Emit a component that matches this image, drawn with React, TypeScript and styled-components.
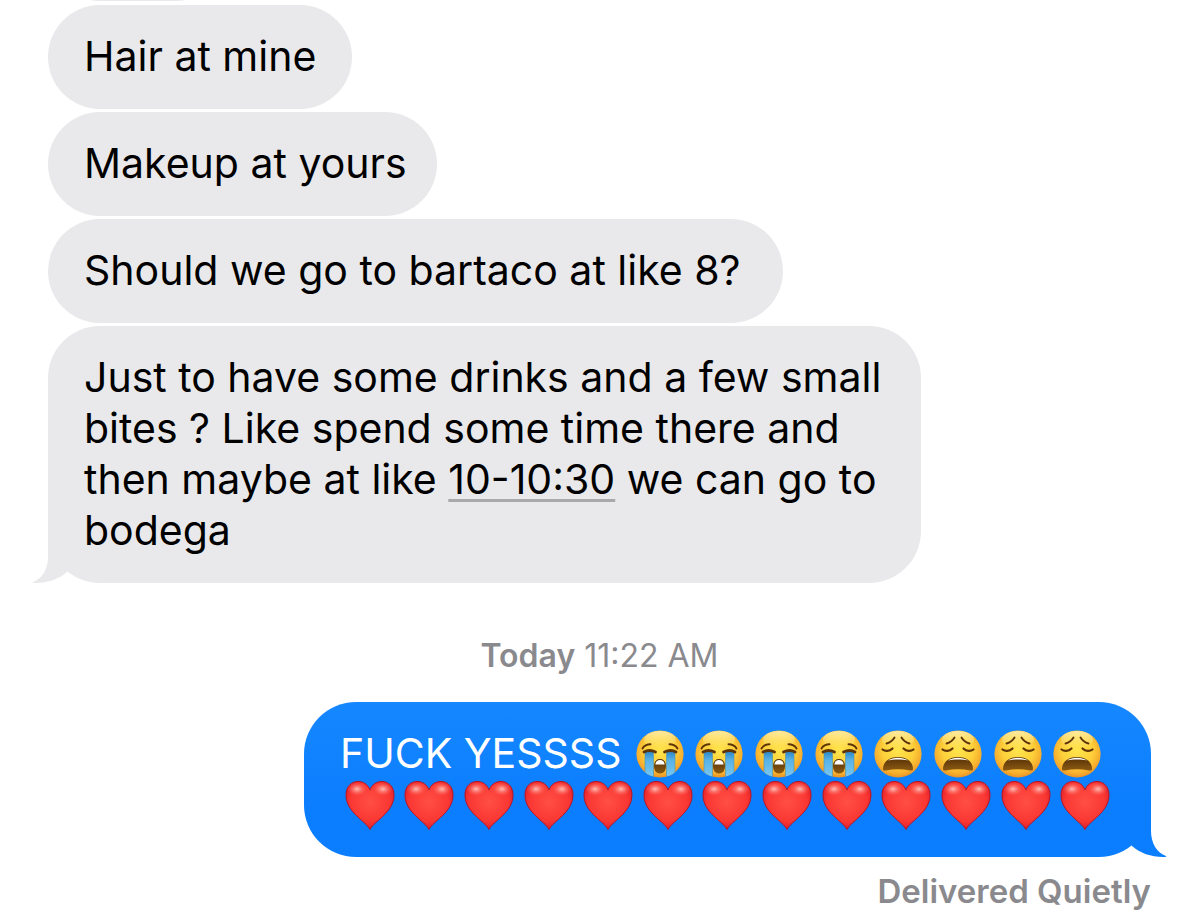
import React from "react";
import styled, { createGlobalStyle } from "styled-components";

const GlobalStyle = createGlobalStyle`
  * { box-sizing: border-box; }
  body { margin: 0; background: #fff; overflow-x: hidden; }
`;

const Thread = styled.main`
  display: flex;
  flex-direction: column;
  padding: 0 48px;
  font-family: Inter, "Liberation Sans", sans-serif;
  font-size: 41px;
  line-height: 51px;
  color: #000;
  overflow: hidden;
`;

const ScrolledAway = styled.div`
  display: flex;
  align-items: flex-end;
  height: 1px;
  margin-bottom: 4px;
  overflow: hidden;
`;

const EarlierBubble = styled.div`
  flex: none;
  width: 180px;
  height: 104px;
  border-radius: 52px;
  background: #e9e9eb;
`;

const Received = styled.section`
  display: flex;
  flex-direction: column;
  align-items: flex-start;
  gap: 3px;
`;

const endPadding = { snug: "30px", regular: "36px", roomy: "42px" };

const Bubble = styled.div<{ $sent?: boolean; $end?: keyof typeof endPadding }>`
  position: relative;
  max-width: ${(p) => (p.$sent ? "847px" : "873px")};
  padding: 26px ${(p) => endPadding[p.$end ?? "regular"]} 27px 36px;
  border-radius: 52px;
  color: ${(p) => (p.$sent ? "#fff" : "#000")};
  background: ${(p) =>
    p.$sent ? "linear-gradient(#1587ff, #0b7eff 68%)" : "#e9e9eb"};
`;

const LongBubble = styled(Bubble)`
  width: 100%;
`;

const TailShape = styled.svg<{ $sent?: boolean }>`
  position: absolute;
  bottom: 0;
  ${(p) => (p.$sent ? "right: -16px; transform: scaleX(-1);" : "left: -16px;")}
  width: 52px;
  height: 54px;
  fill: ${(p) => (p.$sent ? "#0b7eff" : "#e9e9eb")};
`;

const Message = styled.p`
  margin: 0;
  white-space: nowrap;
`;

const TimeLink = styled.a`
  color: inherit;
  text-decoration: underline #a9a9ac 3px;
  text-underline-offset: 5px;
  text-decoration-skip-ink: none;
`;

const Stamp = styled.p`
  margin: 53px 0 26px;
  text-align: center;
  font-size: 32px;
  line-height: 40px;
  color: #8a8a8e;
`;

const Strong = styled.strong`
  font-weight: 600;
`;

const Sent = styled.section`
  display: flex;
  flex-direction: column;
  align-items: flex-end;
`;

const Line = styled.div`
  display: flex;
  justify-content: space-between;
  height: 51px;
  padding-right: 8px;
`;

const Faces = styled.span`
  display: grid;
  grid-template-columns: repeat(8, 1fr);
  flex: 0 0 477px;
  place-items: center;
`;

const Hearts = styled.div`
  display: grid;
  grid-template-columns: repeat(13, 1fr);
  height: 51px;
  place-items: center;
`;

const Emoji = styled.svg`
  display: block;
  width: 50px;
  height: 50px;
`;

const Receipt = styled.p`
  margin: 14px 0 0;
  font-size: 33px;
  line-height: 40px;
  font-weight: 600;
  color: #8a8a8e;
`;

const Tail = ({ sent }: { sent?: boolean }) => (
  <TailShape $sent={sent} viewBox="0 0 52 54" aria-hidden="true">
    <path d="M16 1V28C16 40 10 50 1 53C0 53.500 1 54 4 54C16 54 27 50 35 43L38 36Z" />
  </TailShape>
);

const Definitions = styled.svg`
  position: absolute;
`;

const Gradients = () => (
  <Definitions width="0" height="0" aria-hidden="true">
    <defs>
      <radialGradient id="skin" cx="0.5" cy="0.42" r="0.6">
        <stop offset="0" stopColor="#ffe44c" />
        <stop offset="0.55" stopColor="#fdd03a" />
        <stop offset="0.84" stopColor="#f6ac2d" />
        <stop offset="1" stopColor="#e08a26" />
      </radialGradient>
      <linearGradient id="shine" x1="0" y1="0" x2="0" y2="1">
        <stop offset="0" stopColor="#fffbd0" stopOpacity="0.7" />
        <stop offset="1" stopColor="#fff6b0" stopOpacity="0" />
      </linearGradient>
      <linearGradient id="tear" x1="0" y1="0" x2="0" y2="1">
        <stop offset="0" stopColor="#2f88c6" />
        <stop offset="0.3" stopColor="#58b2e8" />
        <stop offset="1" stopColor="#7ccbf3" />
      </linearGradient>
      <linearGradient id="mouth" x1="0" y1="0" x2="0" y2="1">
        <stop offset="0" stopColor="#553007" />
        <stop offset="1" stopColor="#8c5a12" />
      </linearGradient>
      <radialGradient id="heart" cx="0.5" cy="0.42" r="0.62">
        <stop offset="0" stopColor="#ff4f45" />
        <stop offset="0.65" stopColor="#fa3833" />
        <stop offset="0.9" stopColor="#e3222a" />
        <stop offset="1" stopColor="#b81324" />
      </radialGradient>
      <radialGradient id="gloss">
        <stop offset="0" stopColor="#ffd8d0" stopOpacity="0.85" />
        <stop offset="1" stopColor="#ff6a5c" stopOpacity="0" />
      </radialGradient>
      <clipPath id="head">
        <circle cx="25" cy="25" r="23.600" />
      </clipPath>
    </defs>
  </Definitions>
);

const Head = () => (
  <>
    <circle cx="25" cy="25" r="23.600" fill="url(#skin)" />
    <ellipse cx="25" cy="10.500" rx="16" ry="8.500" fill="url(#shine)" />
  </>
);

const Sobbing = () => (
  <Emoji viewBox="0 0 50 50" role="img" aria-label="loudly crying face">
    <Head />
    <g clipPath="url(#head)">
      <path d="M10 23H18.500V50H10ZM31.500 23H40V50H31.500Z" fill="url(#tear)" />
      <path d="M10 24V50M18.500 24V50M31.500 24V50M40 24V50" stroke="#4f93ae" strokeWidth="0.8" opacity="0.8" />
    </g>
    <g fill="none" stroke="#5e3409" strokeLinecap="round">
      <path d="M7.500 19.500C9 17 12 15.300 15.500 15.300M42.500 19.500C41 17 38 15.300 34.500 15.300" strokeWidth="1.900" />
      <path d="M9 23C12 21.300 17 21.300 20.500 23M41 23C38 21.300 33 21.300 29.500 23" strokeWidth="2.800" />
    </g>
    <path d="M25 30C29 30 31 33 31 37C31 41.500 28.800 44.500 25 44.500C21.200 44.500 19 41.500 19 37C19 33 21 30 25 30Z" fill="url(#mouth)" />
    <path d="M25 31C27.700 31 29.300 32.800 29.700 35.500H20.300C20.700 32.800 22.300 31 25 31Z" fill="#fff" />
  </Emoji>
);

const Weary = () => (
  <Emoji viewBox="0 0 50 50" role="img" aria-label="weary face">
    <Head />
    <g fill="none" stroke="#5e3409" strokeLinecap="round" strokeWidth="1.900">
      <path d="M13.500 14.500C17 13.500 20 11 21.500 8.500M36.500 14.500C33 13.500 30 11 28.500 8.500" />
      <path d="M9.500 20.500C12 22.500 16.500 22.500 19.500 19.500M40.500 20.500C38 22.500 33.500 22.500 30.500 19.500" strokeWidth="2.200" />
    </g>
    <path d="M10 40C10 33 16 28 25 28C34 28 40 33 40 40C40 41.600 38.500 41.800 37 41.400C29 39.800 21 39.800 13 41.400C11.500 41.800 10 41.600 10 40Z" fill="url(#mouth)" />
    <path d="M15 31.500C18 29.500 21 28.700 25 28.700C29 28.700 32 29.500 35 31.500C29 30.200 21 30.200 15 31.500Z" fill="#fff" />
  </Emoji>
);

const Heart = () => (
  <Emoji viewBox="0 0 50 50" role="img" aria-label="red heart">
    <path
      d="M25 49.500C21 41 1 32.500 1 15C1 6.500 6.500 1.500 13 1.500C18.500 1.500 23 4.500 25 10C27 4.500 31.500 1.500 37 1.500C43.500 1.500 49 6.500 49 15C49 32.500 29 41 25 49.500Z"
      fill="url(#heart)"
      stroke="#b51425"
      strokeWidth="1"
    />
    <ellipse cx="12" cy="9" rx="10" ry="7" fill="url(#gloss)" />
    <ellipse cx="38" cy="9" rx="10" ry="7" fill="url(#gloss)" />
  </Emoji>
);

export default function App() {
  return (
    <>
      <GlobalStyle />
      <Gradients />
      <Thread>
        <ScrolledAway aria-hidden="true">
          <EarlierBubble />
        </ScrolledAway>
        <Received>
          <Bubble>
            <Message>Hair at mine</Message>
          </Bubble>
          <Bubble $end="snug">
            <Message>Makeup at yours</Message>
          </Bubble>
          <Bubble $end="roomy">
            <Message>Should we go to bartaco at like 8?</Message>
          </Bubble>
          <LongBubble>
            <Tail />
            <Message>
              Just to have some drinks and a few small
              <br />
              bites ? Like spend some time there and
              <br />
              then maybe at like <TimeLink href="#time">10-10:30</TimeLink> we can go to
              <br />
              bodega
            </Message>
          </LongBubble>
        </Received>
        <Stamp>
          <Strong>Today</Strong> 11:22 AM
        </Stamp>
        <Sent>
          <LongBubble $sent>
            <Tail sent />
            <Line>
              <Message>FUCK YESSSS</Message>
              <Faces>
                {[0, 1, 2, 3].map((n) => (
                  <Sobbing key={n} />
                ))}
                {[4, 5, 6, 7].map((n) => (
                  <Weary key={n} />
                ))}
              </Faces>
            </Line>
            <Hearts>
              {Array.from({ length: 13 }, (_, n) => (
                <Heart key={n} />
              ))}
            </Hearts>
          </LongBubble>
          <Receipt>Delivered Quietly</Receipt>
        </Sent>
      </Thread>
    </>
  );
}
